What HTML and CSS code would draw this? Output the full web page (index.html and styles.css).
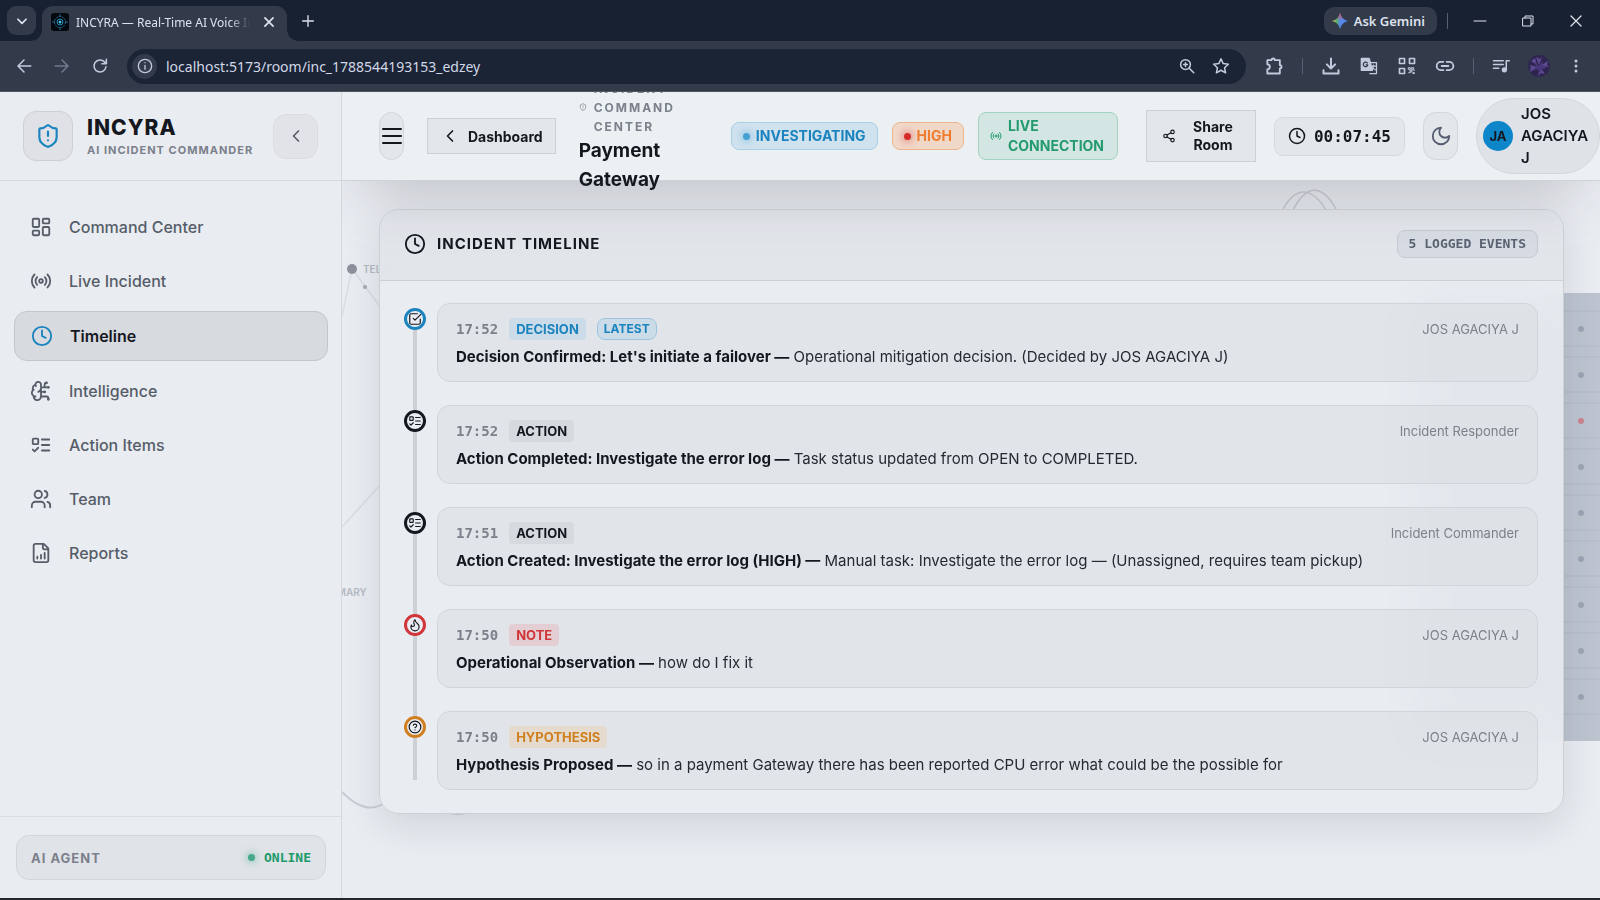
FILE: index.html
```html
<!DOCTYPE html>
<html lang="en">
<head>
<meta charset="utf-8">
<title>INCYRA — Real-Time AI Voice Incident Commander</title>
<link rel="stylesheet" href="styles.css">
</head>
<body>
<svg class="defs" aria-hidden="true">
  <symbol id="i-clock" viewBox="0 0 24 24"><circle cx="12" cy="12" r="10"/><path d="M12 6v6l4 2"/></symbol>
  <symbol id="i-radio" viewBox="0 0 24 24"><path d="M4.9 19.1C1 15.2 1 8.8 4.9 4.9M7.8 16.2c-2.3-2.3-2.3-6.1 0-8.5M16.2 7.8c2.3 2.3 2.3 6.1 0 8.5M19.1 4.9C23 8.8 23 15.1 19.1 19"/><circle cx="12" cy="12" r="2"/></symbol>
  <symbol id="i-todo" viewBox="0 0 24 24"><rect x="3" y="5" width="6" height="6" rx="1"/><path d="m3 17 2 2 4-4M13 6h8M13 12h8M13 18h8"/></symbol>
  <symbol id="i-shield" viewBox="0 0 24 24"><path d="M20 13c0 5-3.5 7.500-7.660 8.950a1 1 0 0 1-.67-.01C7.500 20.500 4 18 4 13V6a1 1 0 0 1 1-1c2 0 4.500-1.200 6.240-2.720a1.170 1.170 0 0 1 1.520 0C14.510 3.810 17 5 19 5a1 1 0 0 1 1 1zM12 8v4M12 16h.01"/></symbol>
  <symbol id="i-left" viewBox="0 0 24 24"><path d="m15 18-6-6 6-6"/></symbol>
</svg>
<div class="window">
  <header class="tabstrip">
    <button class="tab-search" aria-label="Search tabs"><svg class="ico s14 bold" viewBox="0 0 24 24"><path d="m5 9 7 7 7-7"/></svg></button>
    <div class="tab">
      <svg class="favicon" viewBox="0 0 18 18"><rect width="18" height="18" rx="3" fill="#05090f"/><g fill="none" stroke="#1d6d8f"><circle cx="9" cy="9" r="5.500" stroke-dasharray="2 1"/><circle cx="9" cy="9" r="3" stroke="#2690bb"/><path d="M9 1v3M9 14v3M1 9h3M14 9h3"/></g><circle cx="9" cy="9" r="1.500" fill="#49c4ea"/></svg>
      <span class="tab-title">INCYRA — Real-Time AI Voice Incident</span>
      <button class="plain" aria-label="Close tab"><svg class="ico s14 bold" viewBox="0 0 24 24"><path d="M5 5l14 14M19 5 5 19"/></svg></button>
    </div>
    <button class="plain new-tab" aria-label="New tab"><svg class="ico s16" viewBox="0 0 24 24"><path d="M12 4v16M4 12h16"/></svg></button>
    <button class="gemini"><svg class="spark" viewBox="0 0 16 16"><defs><linearGradient id="gs" x1="0" y1="0" x2="1" y2="0"><stop offset="0" stop-color="#f3c64a"/><stop offset=".3" stop-color="#4fb36a"/><stop offset=".5" stop-color="#5b86e8"/><stop offset="1" stop-color="#4a86f5"/></linearGradient><linearGradient id="gt" x1="0" y1="0" x2="0" y2="1"><stop offset="0" stop-color="#f0524b"/><stop offset=".45" stop-color="#f0524b" stop-opacity="0"/></linearGradient></defs><path d="M8 0q1.500 6.500 8 8-6.500 1.500-8 8-1.500-6.500-8-8Q6.500 6.500 8 0" fill="url(#gs)"/><path d="M8 0q1.500 6.500 8 8-6.500 1.500-8 8-1.500-6.500-8-8Q6.500 6.500 8 0" fill="url(#gt)"/></svg>Ask Gemini</button>
    <span class="sep strip-sep"></span>
    <div class="win-controls">
      <button class="plain" aria-label="Minimize"><svg class="ico s14" viewBox="0 0 14 14"><path d="M1 7h12" stroke-width="1"/></svg></button>
      <button class="plain" aria-label="Restore"><svg class="ico s14" viewBox="0 0 14 14"><path d="M2 4h8v8H2zM4 4V2h8v8h-2" stroke-width="1"/></svg></button>
      <button class="plain" aria-label="Close"><svg class="ico s14" viewBox="0 0 14 14"><path d="m2 2 10 10M12 2 2 12" stroke-width="1.300"/></svg></button>
    </div>
  </header>
  <div class="toolbar">
    <div class="nav-buttons">
      <button class="plain" aria-label="Back"><svg class="ico s18" viewBox="0 0 24 24"><path d="M21 12H4M12 4l-8 8 8 8"/></svg></button>
      <button class="plain dim" aria-label="Forward"><svg class="ico s18" viewBox="0 0 24 24"><path d="M3 12h17M12 4l8 8-8 8"/></svg></button>
      <button class="plain" aria-label="Reload"><svg class="ico s18" viewBox="0 0 24 24"><path d="M20 13a8 8 0 1 1-2-6.500L20 8.500M20.500 3v6h-6"/></svg></button>
    </div>
    <div class="omnibox">
      <span class="site-info"><svg class="ico s16" viewBox="0 0 24 24"><circle cx="12" cy="12" r="10"/><path d="M12 11v6M12 7h.01"/></svg></span>
      <input class="url" aria-label="Address" value="localhost:5173/room/inc_1788544193153_edzey">
      <button class="plain" aria-label="Zoom"><svg class="ico s18" viewBox="0 0 24 24"><circle cx="10" cy="10" r="6.500"/><path d="m15 15 6 6M10 7.500v5M7.500 10h5"/></svg></button>
      <button class="plain" aria-label="Bookmark"><svg class="ico s18" viewBox="0 0 24 24"><path d="m12 2.500 2.900 6.300 6.900.8-5.100 4.700 1.400 6.800-6.100-3.400-6.100 3.400 1.400-6.800-5.100-4.700 6.900-.8z"/></svg></button>
    </div>
    <div class="extensions">
      <button class="plain" aria-label="Extensions"><svg class="ico s20" viewBox="0 0 24 24"><path d="M4 5h5a2 2 0 0 1 4 0h6v6a2 2 0 0 1 0 4v6H4v-5a3 3 0 0 0 0-6z" stroke-width="2.200"/></svg></button>
      <span class="sep"></span>
      <button class="plain" aria-label="Downloads"><svg class="ico s20" viewBox="0 0 24 24"><path d="M12 3v11M7 10l5 5 5-5M3 17v4h18v-4" stroke-width="2.400"/></svg></button>
      <button class="plain" aria-label="Translate"><svg class="ico s20" viewBox="0 0 24 24"><path d="M3 3h9l4 14H3z" fill="currentColor"/><path d="M14 8h7v13h-8M15 12h5M17.500 11v1c-.5 2-2 4-3 4.500M16 13c.7 1.500 2 3 3.500 3.500" stroke-width="1.500"/><path d="M10 8.500a2.700 2.700 0 1 0 .5 2H8.500" stroke="#333b4b" stroke-width="1.500"/></svg></button>
      <button class="plain" aria-label="QR code"><svg class="ico s20" viewBox="0 0 24 24"><path d="M3 3h6v6H3zM15 3h6v6h-6zM3 15h6v6H3z"/><path d="M14 14h2v2h-2zM18 14h2v2h-2zM16 17h2v2h-2zM20 17h1M14 20h2M19 20h2v1h-2" stroke-width="1.200"/></svg></button>
      <button class="plain" aria-label="Copy link"><svg class="ico s20" viewBox="0 0 24 24"><path d="M10 7H7a5 5 0 0 0 0 10h3M14 7h3a5 5 0 0 1 0 10h-3M8 12h8" stroke-width="2.200"/></svg></button>
      <span class="sep"></span>
      <button class="plain" aria-label="Media"><svg class="ico s18" viewBox="0 0 24 24"><path d="M2 5h13M2 10h13M2 15h7M23 5h-4v12"/><circle cx="16.500" cy="17" r="2.500" fill="currentColor"/></svg></button>
      <button class="plain" aria-label="Profile"><svg class="s22" viewBox="0 0 22 22"><circle cx="11" cy="11" r="11" fill="#2f2650"/><g fill="#5f4a94"><path d="m11 10-3-8 4 2 2-2zM12 11l8-5-1 4 2 2zM10 12l-8 5 1-5-2-2zM12 12l5 7-4-1-3 3zM9 10 3 6l4-3z"/></g><path d="m11 11 3-5 1 4 3 3-4 1-2 4-2-4-5 1 3-4-2-4z" fill="#49387c"/></svg></button>
      <button class="plain" aria-label="Menu"><svg class="s16" viewBox="0 0 16 16" fill="currentColor"><circle cx="8" cy="3" r="1.500"/><circle cx="8" cy="8" r="1.500"/><circle cx="8" cy="13" r="1.500"/></svg></button>
    </div>
  </div>

  <div class="app">
    <aside class="sidebar">
      <div class="brand">
        <span class="logo"><svg class="ico s26"><use href="#i-shield"/></svg></span>
        <div class="brand-text"><strong>INCYRA</strong><span>AI INCIDENT COMMANDER</span></div>
        <button class="collapse" aria-label="Collapse sidebar"><svg class="ico s20"><use href="#i-left"/></svg></button>
      </div>
      <nav class="nav">
        <a href="#"><svg class="ico s22" viewBox="0 0 24 24"><rect x="3" y="3" width="7" height="9" rx="1"/><rect x="14" y="3" width="7" height="5" rx="1"/><rect x="14" y="12" width="7" height="9" rx="1"/><rect x="3" y="16" width="7" height="5" rx="1"/></svg>Command Center</a>
        <a href="#"><svg class="ico s22"><use href="#i-radio"/></svg>Live Incident</a>
        <a href="#" class="active" aria-current="page"><svg class="ico s22"><use href="#i-clock"/></svg>Timeline</a>
        <a href="#"><svg class="ico s22" viewBox="0 0 24 24"><path d="M12 5a3 3 0 1 0-5.997.125 4 4 0 0 0-2.526 5.770 4 4 0 0 0 .556 6.588A4 4 0 1 0 12 18ZM9 13a4.500 4.500 0 0 0 3-4M6.003 5.125A3 3 0 0 0 6.401 6.500M3.477 10.896a4 4 0 0 1 .585-.396M6 18a4 4 0 0 1-1.967-.516M12 13h4M12 18h6a2 2 0 0 1 2 2v1M12 8h8M16 8V5a2 2 0 0 1 2-2"/><circle cx="16" cy="13" r=".5"/><circle cx="18" cy="3" r=".5"/><circle cx="20" cy="21" r=".5"/><circle cx="20" cy="8" r=".5"/></svg>Intelligence</a>
        <a href="#"><svg class="ico s22"><use href="#i-todo"/></svg>Action Items</a>
        <a href="#"><svg class="ico s22" viewBox="0 0 24 24"><path d="M16 21v-2a4 4 0 0 0-4-4H6a4 4 0 0 0-4 4v2M22 21v-2a4 4 0 0 0-3-3.870M16 3.130a4 4 0 0 1 0 7.750"/><circle cx="9" cy="7" r="4"/></svg>Team</a>
        <a href="#"><svg class="ico s22" viewBox="0 0 24 24"><path d="M15 2H6a2 2 0 0 0-2 2v16a2 2 0 0 0 2 2h12a2 2 0 0 0 2-2V7ZM14 2v4a2 2 0 0 0 2 2h4M8 18v-2M12 18v-4M16 18v-6"/></svg>Reports</a>
      </nav>
      <div class="side-foot">
        <div class="agent"><span class="agent-name">AI AGENT</span><span class="online"><i class="dot green"></i>ONLINE</span></div>
      </div>
    </aside>

    <div class="main">
      <header class="topbar">
        <button class="pill-btn menu" aria-label="Open menu"><svg class="ico s24" viewBox="0 0 24 24"><path d="M3 5h18M3 12h18M3 19h18"/></svg></button>
        <button class="box-btn"><svg class="ico s20"><use href="#i-left"/></svg>Dashboard</button>
        <div class="heading">
          <div class="eyebrow"><svg class="ico s8"><use href="#i-shield"/></svg><span>INCIDENT COMMAND CENTER</span></div>
          <h1>Payment Gateway</h1>
        </div>
        <div class="badges">
          <span class="badge blue"><i class="dot"></i>INVESTIGATING</span>
          <span class="badge orange"><i class="dot"></i>HIGH</span>
          <span class="badge live"><svg class="ico s12"><use href="#i-radio"/></svg><span>LIVE CONNECTION</span></span>
        </div>
        <div class="actions">
          <button class="box-btn share"><svg class="ico s14" viewBox="0 0 24 24"><circle cx="18" cy="5" r="3"/><circle cx="6" cy="12" r="3"/><circle cx="18" cy="19" r="3"/><path d="m8.590 13.510 6.830 3.980M15.410 6.510l-6.820 3.980"/></svg><span>Share Room</span></button>
          <div class="timer"><svg class="ico s18"><use href="#i-clock"/></svg>00:07:45</div>
          <button class="pill-btn theme" aria-label="Toggle theme"><svg class="ico s22" viewBox="0 0 24 24"><path d="M12 3a6 6 0 0 0 9 9 9 9 0 1 1-9-9Z"/></svg></button>
          <button class="profile"><span class="initials">JA</span><span>JOS AGACIYA J</span></button>
        </div>
      </header>

      <main class="stage">
        <svg class="backdrop" viewBox="0 0 1258 717" preserveAspectRatio="xMidYMin slice" aria-hidden="true">
          <g fill="none" stroke="#d9dce1" stroke-width="1.500">
            <path d="M10 88 0 135M10 88l60 80M0 346l50-55"/>
            <path d="M0 611q24 24 42 11M90 623q28 20 46 0" stroke="#c9cdd3" stroke-width="2"/>
            <path d="M940 30c14-26 30-24 44-1M951 29c14-27 30-26 44 1" stroke="#c5c8cd"/>
          </g>
          <circle cx="10" cy="88" r="5" fill="#8c919b"/><circle cx="23" cy="106" r="2" fill="#a5a9b2"/>
          <g class="bg-labels"><text x="21" y="92">TELEMETRY</text><text x="-21" y="415">PRIMARY</text></g>
          <rect x="1070" y="112" width="200" height="448" fill="#bdc4d0"/>
          <path d="M1070 130h200M1070 165h200M1070 176h200M1070 211h200M1070 222h200M1070 257h200M1070 268h200M1070 303h200M1070 314h200M1070 349h200M1070 360h200M1070 395h200M1070 406h200M1070 441h200M1070 452h200M1070 487h200M1070 498h200M1070 533h200" stroke="#b2b9c4"/>
          <g fill="#9da5b5"><circle cx="1239" cy="148" r="3"/><circle cx="1239" cy="194" r="3"/><circle cx="1239" cy="240" r="3" fill="#cc8590"/><circle cx="1239" cy="286" r="3"/><circle cx="1239" cy="332" r="3"/><circle cx="1239" cy="378" r="3"/><circle cx="1239" cy="424" r="3"/><circle cx="1239" cy="470" r="3"/><circle cx="1239" cy="516" r="3"/></g>
        </svg>
        <section class="card">
          <div class="card-head"><svg class="ico s22"><use href="#i-clock"/></svg><h2>INCIDENT TIMELINE</h2><span class="count">5 LOGGED EVENTS</span></div>
          <ol class="timeline">
            <li class="decision">
              <span class="node"><svg class="ico s14" viewBox="0 0 24 24"><path d="m9 11 3 3L22 4M21 12v7a2 2 0 0 1-2 2H5a2 2 0 0 1-2-2V5a2 2 0 0 1 2-2h11"/></svg></span>
              <article><div class="meta"><time>17:52</time><span class="tag">DECISION</span><span class="tag latest">LATEST</span><span class="who">JOS AGACIYA J</span></div>
              <p><strong>Decision Confirmed: Let's initiate a failover —</strong> Operational mitigation decision. (Decided by JOS AGACIYA J)</p></article>
            </li>
            <li class="action">
              <span class="node"><svg class="ico s14"><use href="#i-todo"/></svg></span>
              <article><div class="meta"><time>17:52</time><span class="tag">ACTION</span><span class="who">Incident Responder</span></div>
              <p><strong>Action Completed: Investigate the error log —</strong> Task status updated from OPEN to COMPLETED.</p></article>
            </li>
            <li class="action">
              <span class="node"><svg class="ico s14"><use href="#i-todo"/></svg></span>
              <article><div class="meta"><time>17:51</time><span class="tag">ACTION</span><span class="who">Incident Commander</span></div>
              <p><strong>Action Created: Investigate the error log (HIGH) —</strong> Manual task: Investigate the error log — (Unassigned, requires team pickup)</p></article>
            </li>
            <li class="note">
              <span class="node"><svg class="ico s14" viewBox="0 0 24 24"><path d="M8.500 14.500A2.500 2.500 0 0 0 11 12c0-1.380-.5-2-1-3-1.072-2.143-.224-4.054 2-6 .5 2.500 2 4.900 4 6.500 2 1.600 3 3.500 3 5.500a7 7 0 1 1-14 0c0-1.153.433-2.294 1-3a2.500 2.500 0 0 0 2.500 2.500z"/></svg></span>
              <article><div class="meta"><time>17:50</time><span class="tag">NOTE</span><span class="who">JOS AGACIYA J</span></div>
              <p><strong>Operational Observation —</strong> how do I fix it</p></article>
            </li>
            <li class="hypothesis">
              <span class="node"><svg class="ico s14" viewBox="0 0 24 24"><circle cx="12" cy="12" r="10"/><path d="M9.090 9a3 3 0 0 1 5.830 1c0 2-3 3-3 3M12 17h.01"/></svg></span>
              <article><div class="meta"><time>17:50</time><span class="tag">HYPOTHESIS</span><span class="who">JOS AGACIYA J</span></div>
              <p><strong>Hypothesis Proposed —</strong> so in a payment Gateway there has been reported CPU error what could be the possible for</p></article>
            </li>
          </ol>
        </section>
      </main>
    </div>
  </div>
</div>
</body>
</html>
```
FILE: styles.css
```css
* { box-sizing: border-box; margin: 0; padding: 0; }
body { background: #e9ecf1; color: #14181e; font-family: Inter, sans-serif; font-size: 15px; }
button, input { font: inherit; color: inherit; border: 0; background: none; }
a { color: inherit; text-decoration: none; }
.defs { display: none; }
.ico { flex: none; fill: none; stroke: currentColor; stroke-width: 2; stroke-linecap: round; stroke-linejoin: round; }
.bold { stroke-width: 3; }
.s8 { width: 8px; height: 8px; }
.s12 { width: 12px; height: 12px; }
.s14 { width: 14px; height: 14px; }
.s16 { width: 16px; height: 16px; }
.s18 { width: 18px; height: 18px; }
.s20 { width: 20px; height: 20px; }
.s22 { width: 22px; height: 22px; }
.s24 { width: 24px; height: 24px; }
.s26 { width: 26px; height: 26px; }

.window { display: flex; flex-direction: column; height: 100vh; overflow: hidden; border-bottom: 2px solid #24282b; }

/* Browser frame */
.tabstrip, .toolbar { position: relative; z-index: 5; display: flex; align-items: center; flex: none; font-family: "Noto Sans", "Open Sans", sans-serif; color: #dde1ec; }
.tabstrip { height: 41px; padding-left: 7px; background: #182131; }
.plain { display: flex; align-items: center; justify-content: center; }
.tab-search { display: flex; align-items: center; justify-content: center; width: 29px; height: 29px; border-radius: 9px; background: #333b4b; }
.tab { position: relative; display: flex; align-items: center; align-self: flex-end; width: 245px; height: 35px; margin-left: 6px; padding: 0 11px 3px 9px; border-radius: 11px 11px 0 0; background: #333b4b; }
.tab::before, .tab::after { content: ""; position: absolute; bottom: 0; width: 10px; height: 10px; }
.tab::before { right: 100%; background: radial-gradient(circle at 0 0, transparent 9px, #333b4b 10px); }
.tab::after { left: 100%; background: radial-gradient(circle at 100% 0, transparent 9px, #333b4b 10px); }
.favicon { width: 18px; height: 18px; flex: none; }
.tab-title { flex: 1; min-width: 0; margin: 0 12px 0 7px; overflow: hidden; white-space: nowrap; font-size: 12px; mask-image: linear-gradient(90deg, #000 88%, transparent); }
.new-tab { margin-left: 13px; }
.gemini { display: flex; align-items: center; gap: 6px; height: 28px; margin-left: auto; padding: 0 12px 0 8px; border-radius: 10px; background: #333b4b; font-size: 13px; font-weight: 600; }
.spark { width: 16px; height: 16px; }
.sep { width: 1px; height: 16px; background: #566075; }
.strip-sep { margin-left: 10px; }
.win-controls { display: flex; gap: 34px; margin: 0 17px 0 25px; }
.toolbar { height: 51px; padding: 0 16px 0 15px; background: #333b4b; border-bottom: 1px solid #50545e; color: #c3cade; }
.nav-buttons { display: flex; gap: 20px; }
.dim { color: #727b8e; }
.omnibox { display: flex; align-items: center; flex: 1; height: 35px; margin: 0 18px; padding: 0 16px 0 5px; gap: 16px; border-radius: 18px; background: #1b2435; }
.site-info { display: flex; align-items: center; justify-content: center; width: 25px; height: 25px; border-radius: 50%; background: #333b4b; }
.url { flex: 1; min-width: 0; margin-left: -7px; font-size: 14px; color: #d2d8e8; }
.extensions { display: flex; align-items: center; gap: 18px; }

/* Application */
.app { display: flex; flex: 1; min-height: 0; }
.sidebar { position: relative; z-index: 4; display: flex; flex-direction: column; flex: none; width: 342px; background: #e9ecf1; border-right: 1px solid #d5d8dd; }
.brand { display: flex; align-items: center; flex: none; height: 89px; padding: 0 23px; border-bottom: 1px solid #d5d8dd; }
.logo { display: flex; align-items: center; justify-content: center; width: 50px; height: 50px; border: 1px solid #cdd0d5; border-radius: 13px; background: #dfe1e6; color: #1b83be; }
.brand-text { display: flex; flex-direction: column; gap: 2px; padding-top: 2px; margin-left: 14px; }
.brand-text strong { font-size: 21px; line-height: 24px; letter-spacing: 1px; font-weight: 800; }
.brand-text span { font-size: 11px; line-height: 16px; letter-spacing: 1px; font-weight: 700; color: #7b808b; white-space: nowrap; }
.collapse { display: flex; align-items: center; justify-content: center; width: 45px; height: 45px; margin-left: auto; border: 1px solid #d9dce0; border-radius: 13px; background: #e1e3e8; color: #565c68; }
.nav { display: flex; flex-direction: column; gap: 6px; flex: 1; padding: 22px 13px 22px 14px; }
.nav a { display: flex; align-items: center; gap: 17px; height: 48px; padding: 0 16px; font-size: 16px; font-weight: 500; color: #565d69; }
.nav .active { height: 50px; border: 1px solid #c3c6cb; border-radius: 13px; background: #d7dadf; color: #14181e; font-weight: 600; }
.nav .active svg { color: #1b83be; }
.side-foot { padding: 18px 15px 18px 16px; border-top: 1px solid #dadde2; }
.agent { display: flex; align-items: center; justify-content: space-between; height: 45px; padding: 0 14px; border: 1px solid #d2d5da; border-radius: 13px; background: #e0e3e8; }
.agent-name { font-size: 13px; font-weight: 700; letter-spacing: 1px; color: #7b808b; }
.online { display: flex; align-items: center; gap: 9px; font-family: "DejaVu Sans Mono", monospace; font-size: 13px; font-weight: 700; color: #1c9a6a; }
.dot { flex: none; width: 7px; height: 7px; border-radius: 50%; background: #46a0d3; box-shadow: 0 0 9px #46a0d3; }
.dot.green { background: #45a888; box-shadow: 0 0 9px #45a888; }

.main { display: flex; flex-direction: column; flex: 1; min-width: 0; }
.topbar { position: relative; z-index: 3; display: flex; align-items: center; flex: none; height: 89px; padding-left: 37px; background: #ebf0f3; border-bottom: 1px solid #cfd3d7; box-shadow: 0 32px 56px -26px #8f9197aa; }
.pill-btn { display: flex; align-items: center; justify-content: center; height: 48px; border: 1px solid #d3d6da; border-radius: 13px; background: #e4e7ea; }
.menu { width: 25px; }
.theme { width: 35px; color: #565d72; }
.box-btn { display: flex; align-items: center; gap: 8px; height: 36px; padding: 0 12px; border: 1px solid #cdd1d5; background: #e4e7ea; font-size: 14px; font-weight: 700; }
.menu + .box-btn { margin-left: 23px; }
.heading { flex: 1; min-width: 0; margin: 0 28px 0 23px; }
.eyebrow { display: flex; align-items: center; gap: 7px; font-size: 12px; line-height: 19px; font-weight: 700; letter-spacing: 2px; color: #7b808b; }
.heading h1 { font-size: 19px; line-height: 29px; font-weight: 700; }
.badges { display: flex; align-items: center; gap: 14px; margin-right: 28px; }
.badge { display: flex; align-items: center; gap: 6px; padding: 3px 11px; border: 1px solid; border-radius: 8px; font-size: 14px; line-height: 20px; font-weight: 700; }
.blue { color: #1b83be; background: #d0e2ee; border-color: #a9cfe4; }
.orange { color: #ef7d30; background: #f0d8c9; border-color: #f0b58e; }
.orange .dot { background: #d42a2a; box-shadow: 0 0 9px #d42a2a; }
.live { width: 140px; color: #249b6e; background: #d3e6e3; border-color: #a3d2c2; }
.actions { display: flex; align-items: center; gap: 18px; flex: none; }
.share { width: 110px; height: 52px; padding: 0 20px 0 15px; gap: 15px; line-height: 18px; text-align: center; }
.share span { flex: 1; }
.timer { display: flex; align-items: center; gap: 8px; height: 39px; padding: 0 13px; border: 1px solid #d7dade; border-radius: 9px; background: #e4e7ea; font-family: "DejaVu Sans Mono", monospace; font-size: 16px; font-weight: 700; }
.profile { display: flex; align-items: center; gap: 8px; width: 124px; padding: 4px 12px 4px 6px; border: 1px solid #d3d6da; border-radius: 38px; background: #dfe2e7; font-size: 15px; line-height: 22px; font-weight: 600; text-align: left; }
.initials { display: flex; align-items: center; justify-content: center; flex: none; width: 30px; height: 30px; border-radius: 50%; background: #0c86c8; font-size: 13px; font-weight: 700; }

.stage { position: relative; flex: 1; min-height: 0; padding: 28px 36px 28px 37px; }
.backdrop { position: absolute; inset: 0; width: 100%; height: 100%; }
.bg-labels { fill: #b5b9c1; font-size: 10px; font-weight: 600; }
.card { position: relative; overflow: hidden; border: 1px solid #cdd1d6; border-radius: 20px; background: #e9ecf1dd; backdrop-filter: blur(24px); box-shadow: 0 12px 36px #1f26301f; }
.card-head { display: flex; align-items: center; gap: 11px; height: 71px; padding: 0 25px 2px 24px; border-bottom: 1px solid #cdd0d5; background: #dcdfe399; }
.card-head h2 { font-size: 15px; line-height: 24px; font-weight: 700; letter-spacing: 1px; }
.count { margin-left: auto; padding: 3px 11px; border: 1px solid #c5c9d0; border-radius: 8px; background: #d7dbe3; font-family: "DejaVu Sans Mono", monospace; font-size: 13px; line-height: 20px; font-weight: 700; color: #5a6170; }
.timeline { display: flex; flex-direction: column; gap: 23px; position: relative; padding: 22px 25px 23px 24px; list-style: none; }
.timeline::before { content: ""; position: absolute; left: 33px; top: 36px; bottom: 33px; width: 4px; background: #cdd0d5; }
.timeline li { display: flex; align-items: flex-start; gap: 11px; --tone: #14181e; --tint: #d6d9de; }
.timeline .decision { --tone: #1b83be; --tint: #cbdce8; }
.timeline .note { --tone: #d13539; --tint: #e3cfd3; }
.timeline .hypothesis { --tone: #d07f1e; --tint: #e4dacd; }
.node { position: relative; display: flex; align-items: center; justify-content: center; flex: none; width: 22px; height: 22px; margin-top: 5px; border: 3px solid var(--tone); border-radius: 50%; background: #e9ecf1; }
.timeline article { flex: 1; min-width: 0; padding: 12px 18px 10px; border: 1px solid #d1d4d9; border-radius: 13px; background: #d8dbe080; }
.meta { display: flex; align-items: center; gap: 11px; height: 25px; margin-bottom: 2px; }
.meta time { font-family: "DejaVu Sans Mono", monospace; font-size: 14px; font-weight: 700; color: #7b808b; }
.tag { padding: 1px 7px; border-radius: 4px; background: var(--tint); color: var(--tone); font-size: 13px; line-height: 20px; font-weight: 700; }
.latest { padding: 0 6px; border: 1px solid #9cc6df; border-radius: 8px; font-size: 12px; }
.who { margin-left: auto; font-size: 13px; color: #7b808b; }
.timeline p { font-size: 15px; line-height: 28px; color: #252a31; }
.timeline p strong { font-weight: 700; color: #14181e; }
```
